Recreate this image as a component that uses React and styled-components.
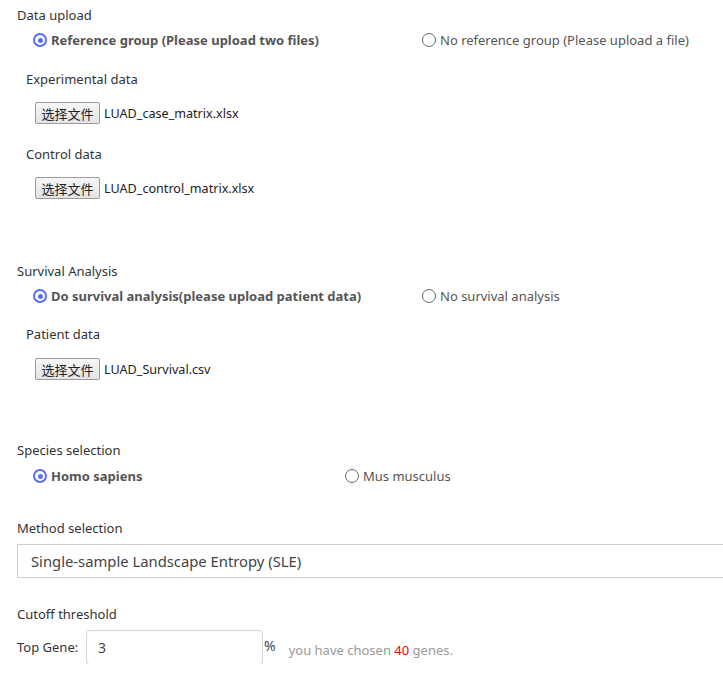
import React from "react";
import styled, { createGlobalStyle } from "styled-components";

const Global = createGlobalStyle`
  html, body { margin: 0; padding: 0; background: #fff; overflow-x: hidden; }
  body { font-family: "Noto Sans", "Noto Sans CJK SC", sans-serif; color: #333; }
`;

const Page = styled.div`
  padding: 5px 0 0 17px;
  width: 723px;
  box-sizing: border-box;
`;

const Title = styled.div`
  font-size: 13px;
  line-height: 20px;
  color: #333;
  margin-top: ${(p) => p.$mt || 0}px;
`;

const RadioRow = styled.div`
  display: flex;
  align-items: center;
  height: 20px;
  padding-left: 16px;
  margin-top: ${(p) => p.$mt || 0}px;
`;

const RadioOption = styled.label`
  display: flex;
  align-items: center;
  gap: 4px;
  width: ${(p) => p.$w || "auto"};
  font-size: 13px;
  color: #555;
  font-weight: ${(p) => (p.$checked ? 700 : 400)};
  white-space: nowrap;
`;

const Circle = styled.span`
  box-sizing: border-box;
  width: 14px;
  height: 14px;
  border-radius: 50%;
  border: ${(p) => (p.$checked ? "2px solid #5b6cf5" : "1.3px solid #666")};
  display: flex;
  align-items: center;
  justify-content: center;
  flex: none;
  &::after {
    content: "";
    display: ${(p) => (p.$checked ? "block" : "none")};
    width: 5px;
    height: 5px;
    border-radius: 50%;
    background: #5b6cf5;
  }
`;

const SubLabel = styled.div`
  font-size: 13px;
  line-height: 20px;
  color: #333;
  padding-left: 9px;
  margin-top: ${(p) => p.$mt || 0}px;
`;

const FileRow = styled.div`
  display: flex;
  align-items: center;
  gap: 4px;
  padding-left: 18px;
  margin-top: ${(p) => p.$mt || 0}px;
  height: 22px;
`;

const FileButton = styled.button`
  box-sizing: border-box;
  height: 22px;
  width: 65px;
  padding: 0;
  border: 1px solid #9a9a9a;
  border-radius: 2px;
  background: linear-gradient(#f6f6f6, #e4e4e4);
  font-family: "Noto Sans CJK SC", sans-serif;
  font-size: 13px;
  color: #222;
`;

const FileName = styled.span`
  font-size: 12.6px;
  color: #222;
`;

const SelectBox = styled.div`
  box-sizing: border-box;
  margin-top: 6px;
  width: 730px;
  height: 34px;
  border: 1px solid #cbd0d8;
  display: flex;
  align-items: center;
  padding-left: 13px;
  padding-bottom: 1px;
  font-size: 14.8px;
  color: #444;
`;

const ThresholdRow = styled.div`
  display: flex;
  align-items: center;
  margin-top: 6px;
  height: 34px;
`;

const InlineLabel = styled.span`
  font-size: 13px;
  color: #333;
  width: 69px;
`;

const NumberInput = styled.div`
  box-sizing: border-box;
  width: 177px;
  height: 35px;
  border: 1px solid #cfd4da;
  border-radius: 4px;
  display: flex;
  align-items: center;
  padding-left: 11px;
  font-size: 14px;
  color: #444;
`;

const Unit = styled.span`
  font-size: 14px;
  color: #444;
  margin-left: 1px;
  margin-top: -4px;
`;

const Hint = styled.span`
  font-size: 13px;
  color: #999;
  margin-left: 13px;
  margin-top: 5px;
`;

const Red = styled.span`
  color: #e00;
`;

function Radio({ checked, width, children }) {
  return (
    <RadioOption $checked={checked} $w={width}>
      <Circle $checked={checked} />
      {children}
    </RadioOption>
  );
}

export default function App() {
  return (
    <>
      <Global />
      <Page>
        <Title>Data upload</Title>
        <RadioRow $mt={5}>
          <Radio checked width="389px">Reference group (Please upload two files)</Radio>
          <Radio>No reference group (Please upload a file)</Radio>
        </RadioRow>
        <SubLabel $mt={19}>Experimental data</SubLabel>
        <FileRow $mt={13}>
          <FileButton>选择文件</FileButton>
          <FileName>LUAD_case_matrix.xlsx</FileName>
        </FileRow>
        <SubLabel $mt={20}>Control data</SubLabel>
        <FileRow $mt={13}>
          <FileButton>选择文件</FileButton>
          <FileName>LUAD_control_matrix.xlsx</FileName>
        </FileRow>

        <Title $mt={62}>Survival Analysis</Title>
        <RadioRow $mt={5}>
          <Radio checked width="389px">Do survival analysis(please upload patient data)</Radio>
          <Radio>No survival analysis</Radio>
        </RadioRow>
        <SubLabel $mt={18}>Patient data</SubLabel>
        <FileRow $mt={14}>
          <FileButton>选择文件</FileButton>
          <FileName>LUAD_Survival.csv</FileName>
        </FileRow>

        <Title $mt={60}>Species selection</Title>
        <RadioRow $mt={6}>
          <Radio checked width="312px">Homo sapiens</Radio>
          <Radio>Mus musculus</Radio>
        </RadioRow>

        <Title $mt={32}>Method selection</Title>
        <SelectBox>Single-sample Landscape Entropy (SLE)</SelectBox>

        <Title $mt={26}>Cutoff threshold</Title>
        <ThresholdRow>
          <InlineLabel>Top Gene:</InlineLabel>
          <NumberInput>3</NumberInput>
          <Unit>%</Unit>
          <Hint>
            you have chosen <Red>40</Red> genes.
          </Hint>
        </ThresholdRow>
      </Page>
    </>
  );
}
